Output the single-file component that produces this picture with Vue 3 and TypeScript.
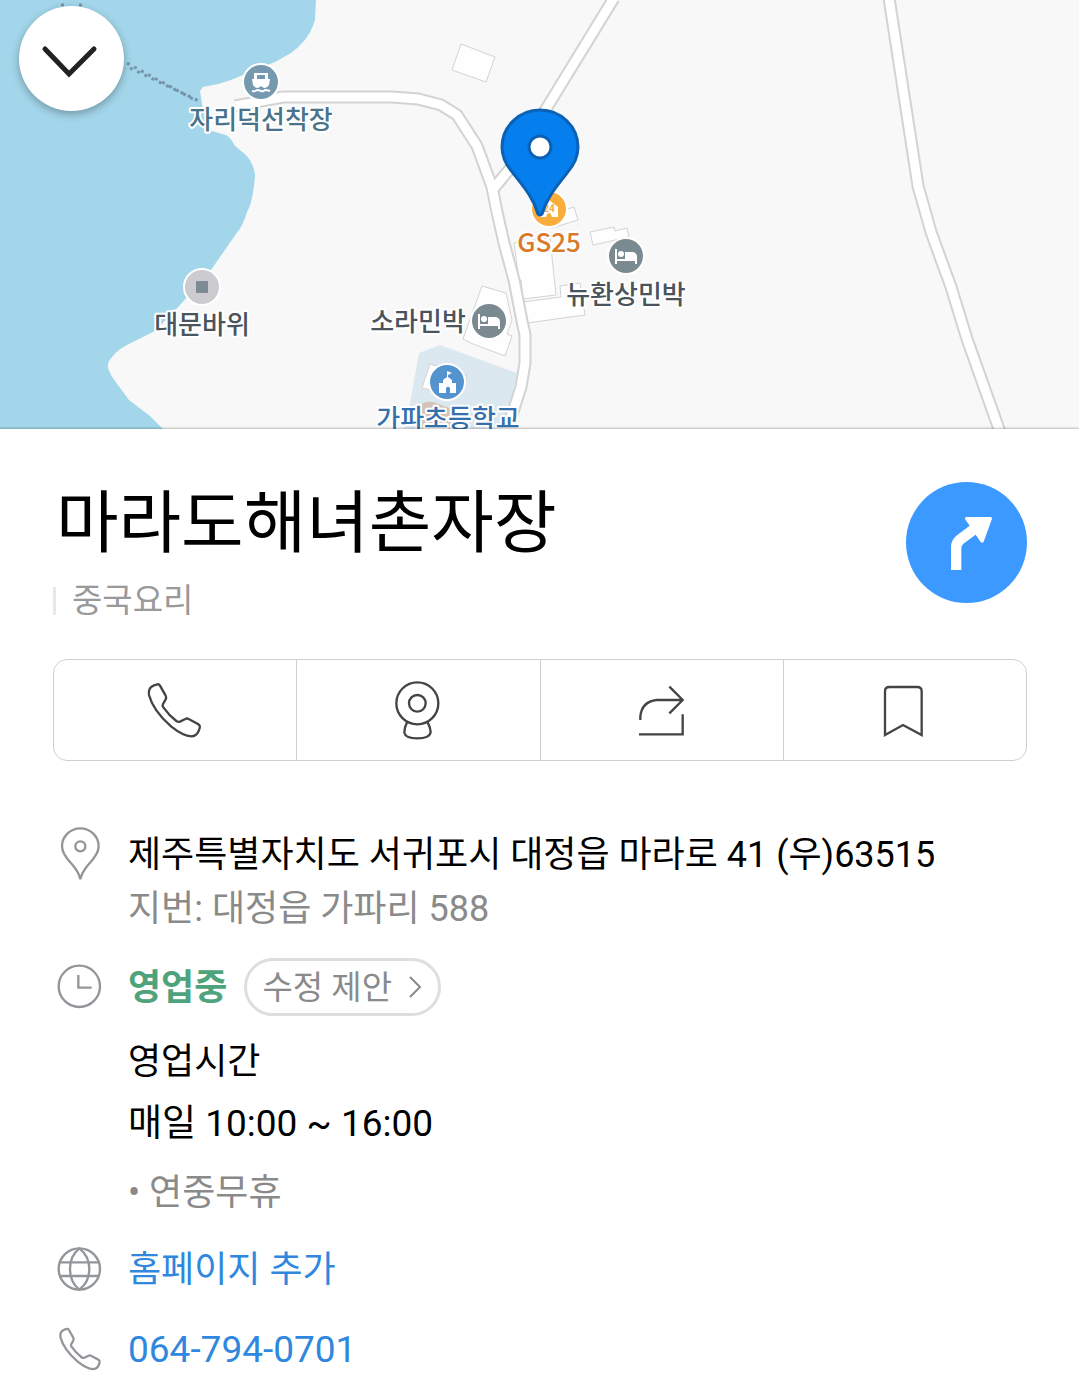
<script setup lang="ts">
interface Label {
  text: string
  x: number
  y: number
  color: string
}

const labels: Label[] = [
  { text: '자리덕선착장', x: 261, y: 129, color: '#4a738a' },
  { text: '대문바위', x: 202, y: 334, color: '#4a545c' },
  { text: '소라민박', x: 418, y: 331, color: '#4a545c' },
  { text: '뉴환상민박', x: 626, y: 304, color: '#4a545c' },
  { text: 'GS25', x: 549, y: 252, color: '#d87a2a' },
  { text: '가파초등학교', x: 448, y: 428, color: '#3370ac' },
]

const buildings: string[] = [
  '461,44 495,57 486,82 452,70',
  '482,286 506,293 512,320 507,334 512,336 505,356 473,344 463,339',
  '514,243 550,238 556,295 523,299 521,280 519,280',
  '523,302 561,297 560,286 580,283 585,315 527,323',
  '590,232 614,227 615,231 627,228 629,237 593,245',
  '560,211 574,207 578,220 552,228',
  '430,364 467,376 460,396 422,388',
]

const roads: string[] = [
  'M235 106 L283 97 H392 L418 99 L441 105 L457 115 L477 146 L492 187 L497 212 L504 243 L514 280 L522 321 L525 335 V363 L521 387 L513 412 L504 432',
  'M494 188 L509 170 L546 109 L614 -2',
  'M889 -2 L918 186 L931 232 L951 287 L967 339 L1000 432',
]

const beds = [
  { x: 626, y: 256 },
  { x: 489, y: 321 },
]

const phonePath =
  'M343 136 L353 133 Q358 132 361 137 L378 167 Q381 173 378 178 L370 192 Q367 197 371 202 Q388 226 410 243 Q415 247 421 245 L437 237 Q442 234 447 237 L476 253 Q482 257 480 264 L477 273 Q470 289 455 289 Q430 288 395 260 Q340 212 328 165 Q324 143 343 136Z'
</script>

<template>
  <main class="place">
    <section class="map" aria-label="지도">
      <svg class="canvas" viewBox="0 0 1079 429" preserveAspectRatio="xMidYMid slice">
        <rect width="1079" height="429" fill="#f8f8f8" />
        <path
          fill="#a3d6ea"
          d="M0 0 H316 L315 20 Q312 31 304 41 Q298 48 291 53 L275 62 L243 75 Q230 81 218 84 L203 87 L200 91 L202 104 L208 130 L226 135 Q231 138 235 146 L246 155 Q254 164 255 175 Q253 202 247 212 Q243 226 236 234 L211 270 L180 305 L155 331 L131 343 Q118 349 113 356 Q107 362 108 367 Q109 373 115 381 L129 400 L150 416 L163 429 H0Z"
        />
        <path class="ferry" d="M127 63 L193 99 M130 68 L201 102 M61 5 H65 M79 5 H83" />
        <polygon fill="#dce8f0" points="419,353 440,345 517,373 509,410 502,429 404,429 410,403" />
        <path fill="#d6c3b8" d="M422 404 Q426 400 436 403 L452 409 V429 H420Z" />
        <polygon v-for="points in buildings" :key="points" class="building" :points="points" />
        <path v-for="d in roads" :key="'edge' + d" class="road-edge" :d="d" />
        <path v-for="d in roads" :key="'fill' + d" class="road-fill" :d="d" />

        <g transform="translate(261 82)">
          <circle class="poi" r="17" fill="#7599ae" />
          <path
            fill="#fff"
            fill-rule="evenodd"
            d="M-7 -9 H7 V-3 H9 L8 3 Q6 6 4 6 Q2 6 0 4 Q-2 6 -4 6 Q-6 6 -8 3 L-9 -3 H-7Z M-4 -7 V-3 H4 V-7Z"
          />
          <path d="M-9 9 Q-7 10 -4 8 Q-2 8 0 9 Q2 10 4 8 Q6 8 9 9" fill="none" stroke="#fff" stroke-width="2" />
        </g>
        <g transform="translate(202 287)">
          <circle class="poi" r="17" fill="#cbcbd0" />
          <rect x="-6" y="-6" width="12" height="12" rx="1" fill="#7c8b93" />
        </g>
        <g v-for="bed in beds" :key="bed.x" :transform="`translate(${bed.x} ${bed.y})`">
          <circle class="poi" r="17" fill="#7b8990" />
          <path d="M-10 -7 V8 M-10 4 H10 V8" fill="none" stroke="#fff" stroke-width="2" />
          <path d="M-1 3 V-4 H7 Q11 -3 11 1 V5 H-9 V3Z" fill="#fff" />
          <circle cx="-5" cy="-2" r="3" fill="#fff" />
        </g>
        <g transform="translate(447 382)">
          <circle class="poi" r="17" fill="#5593cf" />
          <path
            fill="#fff"
            d="M0 -11 L5 -9 L1 -7 V-5 L5 -2 V1 H9 V11 H3 V6 Q1 3 -1 6 V11 H-8 V1 H-4 V-2 L0 -5Z"
          />
        </g>
        <g transform="translate(549 209)">
          <circle class="poi" r="17" fill="#fbad3c" />
          <path d="M-9 -3 L0 -9 L9 -2 V8 H3 Q2 4 0 4 Q-2 4 -3 8 H-9Z" fill="#fff" />
          <text class="hours-mark" x="0" y="3">24</text>
        </g>

        <text
          v-for="label in labels"
          :key="label.text"
          class="label"
          :x="label.x"
          :y="label.y"
          :fill="label.color"
        >{{ label.text }}</text>

        <path
          fill="#057fee"
          stroke="#0b62b4"
          stroke-width="3"
          stroke-linejoin="round"
          d="M538 214 C533 197 523 186 513 173 C506 165 502 157 502 147 A38 37 0 0 1 578 147 C578 157 574 165 567 173 C557 186 547 197 542 214 Q540 216 538 214Z"
        />
        <circle cx="540" cy="147" r="11" fill="#fff" stroke="#0b62b4" stroke-width="3" />
      </svg>
      <button class="collapse" type="button" aria-label="닫기">
        <svg viewBox="0 0 105 105" width="105" height="105">
          <path d="M26 43 L50 68 L75 43" fill="none" stroke="#222" stroke-width="5" stroke-linecap="round" />
        </svg>
      </button>
    </section>

    <section class="sheet">
      <header class="header">
        <div class="heading">
          <h1>마라도해녀촌자장</h1>
          <p class="category">중국요리</p>
        </div>
        <button class="route" type="button" aria-label="길찾기">
          <svg viewBox="138 66 363 363" width="121" height="121">
            <path
              fill="#fff"
              d="M273 330 V262 Q273 238 292 225 L329 197 L315 177 Q315 171 319 171 H391 Q397 171 396 176 L371 245 Q367 251 362 246 L347 224 L312 250 Q304 256 304 266 V330Z"
            />
          </svg>
        </button>
      </header>

      <nav class="actions">
        <button type="button" aria-label="전화">
          <svg viewBox="316 120 180 180"><path :d="phonePath" /></svg>
        </button>
        <button type="button" aria-label="로드뷰">
          <svg viewBox="1044 120 180 180">
            <circle cx="1132" cy="190" r="63" />
            <circle cx="1132" cy="190" r="25" />
            <path d="M1101 247 Q1093 262 1093 278 Q1096 295 1132 295 Q1170 295 1172 276 Q1171 262 1163 247" />
          </svg>
        </button>
        <button type="button" aria-label="공유">
          <svg viewBox="306 120 180 180">
            <path d="M331 240 V230 Q335 185 380 180 H457 M418 140 L458 180 L418 220 M327 283 H458 V223" />
          </svg>
        </button>
        <button type="button" aria-label="저장">
          <svg viewBox="1036 120 180 180">
            <path d="M1066 285 V154 Q1066 141 1079 141 H1163 Q1176 141 1176 154 V285 L1120 255Z" />
          </svg>
        </button>
      </nav>

      <div class="details">
        <div class="row address">
          <svg class="icon" viewBox="39 50 162 162">
            <path d="M121 207 Q117 187 98 164 Q66 132 66 108 A55 54 0 0 1 176 108 Q176 132 144 164 Q125 187 121 207Z" />
            <circle cx="121" cy="108" r="15" />
          </svg>
          <div class="lines">
            <p>제주특별자치도 서귀포시 대정읍 마라로 41 (우)63515</p>
            <p class="muted">지번: 대정읍 가파리 588</p>
          </div>
        </div>

        <div class="row status-row">
          <svg class="icon" viewBox="39 450 162 162">
            <circle cx="118" cy="529" r="62" />
            <path d="M115 495 V533 H155" />
          </svg>
          <strong class="status">영업중</strong>
          <button class="suggest" type="button">
            <span>수정 제안</span>
            <svg viewBox="0 0 14 24" width="14" height="24">
              <path d="M2 2 L12 12 L2 22" fill="none" stroke="#8a8a8a" stroke-width="2" />
            </svg>
          </button>
        </div>

        <div class="hours">
          <p>영업시간</p>
          <p class="time">매일 10:00 ~ 16:00</p>
          <p class="muted note">• 연중무휴</p>
        </div>

        <div class="row homepage">
          <svg class="icon" viewBox="39 634 162 162">
            <circle cx="118" cy="715" r="62" />
            <path
              d="M118 653 C97 670 90 692 90 715 C90 738 97 760 118 777 C140 760 148 738 148 715 C148 692 140 670 118 653Z M60 695 H176 M60 736 H176"
            />
          </svg>
          <a href="#homepage">홈페이지 추가</a>
        </div>

        <div class="row">
          <svg class="icon phone" viewBox="299 106 210 210"><path :d="phonePath" /></svg>
          <a class="time" href="tel:064-794-0701">064-794-0701</a>
        </div>
      </div>
    </section>
  </main>
</template>

<style>
body {
  margin: 0;
  background: #fff;
}
</style>

<style scoped>
.place {
  font-family: Roboto, "Noto Sans CJK KR", sans-serif;
  color: #000;
}

h1,
p {
  margin: 0;
}

button {
  margin: 0;
  padding: 0;
  border: 0;
  background: none;
  font: inherit;
  color: inherit;
  cursor: pointer;
}

svg {
  display: block;
}

.map {
  position: relative;
  height: 429px;
  overflow: hidden;
  background: #f8f8f8;
}

.canvas {
  width: 100%;
  height: 100%;
}

.ferry {
  fill: none;
  stroke: #7595ad;
  stroke-width: 3;
  stroke-dasharray: 3 5;
}

.building {
  fill: #fefefe;
  stroke: #d3d3d3;
  stroke-width: 1;
}

.road-edge {
  fill: none;
  stroke: #d3d3d3;
  stroke-width: 13;
}

.road-fill {
  fill: none;
  stroke: #fff;
  stroke-width: 9;
}

.poi {
  stroke: #fff;
  stroke-width: 4;
  paint-order: stroke;
}

.label {
  font-family: "Noto Sans CJK KR", sans-serif;
  font-size: 26px;
  font-weight: 500;
  text-anchor: middle;
  stroke: #fff;
  stroke-width: 4;
  stroke-linejoin: round;
  paint-order: stroke;
}

.hours-mark {
  font-size: 10px;
  font-weight: 700;
  text-anchor: middle;
  fill: #fbad3c;
}

.collapse {
  position: absolute;
  top: 6px;
  left: 19px;
  width: 105px;
  height: 105px;
  border-radius: 50%;
  background: #fff;
  box-shadow: 0 3px 9px rgba(0, 0, 0, 0.3);
}

.sheet {
  position: relative;
  padding: 53px 52px 24px 53px;
  background: #fff;
  box-shadow: 0 -1px 2px rgba(0, 0, 0, 0.25);
}

.header {
  display: flex;
  justify-content: space-between;
  align-items: flex-start;
}

h1 {
  padding: 2px 0 0 3px;
  font-size: 68px;
  font-weight: 400;
  line-height: 80px;
}

.category {
  display: flex;
  align-items: center;
  gap: 16px;
  margin-top: 17px;
  font-size: 33px;
  line-height: 40px;
  color: #999;
}

.category::before {
  content: "";
  width: 3px;
  height: 28px;
  background: #e8e8e8;
}

.route {
  flex: none;
  width: 121px;
  height: 121px;
  border-radius: 50%;
  background: #3b99ff;
}

.actions {
  display: flex;
  height: 100px;
  margin-top: 38px;
  border: 1px solid #d0d0d0;
  border-radius: 14px;
}

.actions button {
  display: flex;
  flex: 1;
  align-items: center;
  justify-content: center;
}

.actions button + button {
  border-left: 1px solid #d0d0d0;
}

.actions svg {
  width: 60px;
  height: 60px;
  fill: none;
  stroke: #444;
  stroke-width: 7;
}

.details {
  margin-top: 66px;
  font-size: 36px;
  line-height: 54px;
}

.row {
  display: flex;
  align-items: center;
  gap: 21px;
}

.address {
  align-items: flex-start;
}

.lines {
  padding-top: 1px;
}

.icon {
  flex: none;
  width: 54px;
  height: 54px;
  fill: none;
  stroke: #92969b;
  stroke-width: 7;
}

.phone {
  stroke-width: 9;
}

.muted {
  color: #8a8a8a;
}

.status-row {
  margin-top: 22px;
}

.status {
  padding-top: 2px;
  font-weight: 700;
  color: #4fa37c;
}

.suggest {
  display: flex;
  align-items: center;
  gap: 16px;
  height: 58px;
  box-sizing: border-box;
  margin-left: -4px;
  padding: 0 16px 0 15px;
  border: 3px solid #dedede;
  border-radius: 29px;
  font-size: 33px;
  color: #8a8a8a;
}

.suggest span {
  padding-top: 2px;
}

.hours {
  display: grid;
  gap: 8px;
  margin: 19px 0 0 75px;
}

.time {
  font-size: 37px;
}

.note {
  margin-top: 7px;
}

.homepage {
  margin: 21px 0 24px;
}

a {
  padding-top: 2px;
  color: #2f88de;
  text-decoration: none;
}
</style>
